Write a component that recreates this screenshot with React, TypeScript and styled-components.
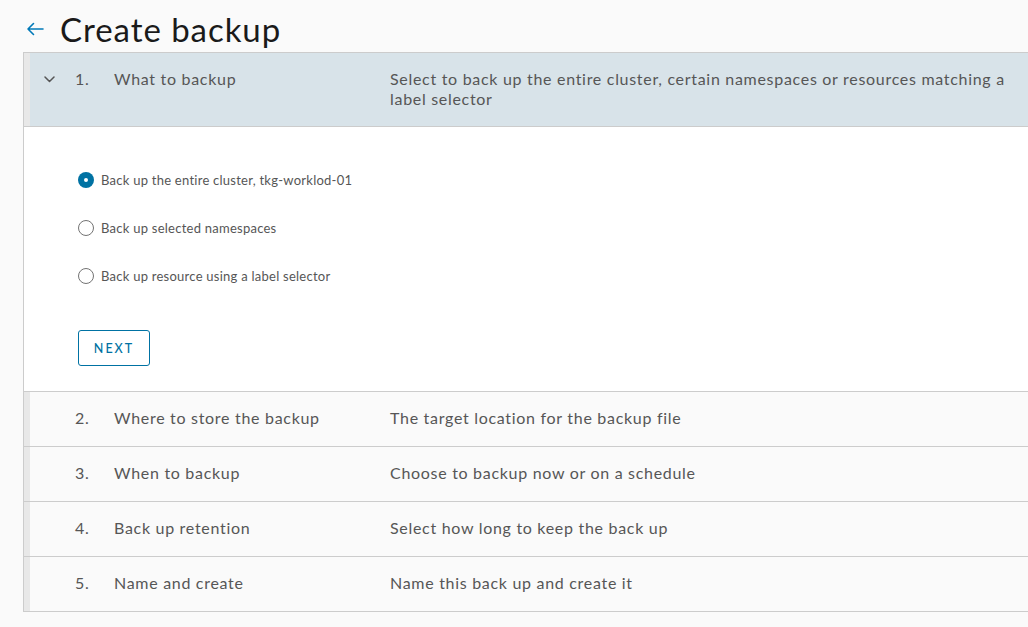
import React from "react";
import styled, { createGlobalStyle } from "styled-components";

const Global = createGlobalStyle`
  html, body { margin: 0; padding: 0; background: #fafafa; }
  body { font-family: "Lato", "Open Sans", sans-serif; color: #565656; }
  * { box-sizing: border-box; }
`;

const Page = styled.div`
  padding: 5px 0 0 23px;
  overflow: hidden;
  width: 1028px;
  height: 627px;
`;

const TitleBar = styled.div`
  display: flex;
  align-items: center;
  height: 47px;
  gap: 16px;
  padding-left: 3px;
`;

const BackButton = styled.button`
  display: flex;
  align-items: center;
  justify-content: center;
  border: none;
  background: none;
  padding: 0;
  width: 18px;
  height: 18px;
  cursor: pointer;
`;

const Title = styled.h1`
  margin: 0;
  font-family: "Lato", sans-serif;
  font-weight: 400;
  font-size: 33px;
  color: #1a1a1a;
  letter-spacing: 0.95px;
`;

const Panel = styled.div`
  border: 1px solid #cccccc;
  border-right: none;
  background: #fafafa;
`;

const Step = styled.section<{ $last?: boolean }>`
  border-bottom: ${(p) => (p.$last ? "none" : "1px solid #cccccc")};
`;

const StepHeader = styled.div<{ $open?: boolean }>`
  display: grid;
  grid-template-columns: 45px 39px 276px 1fr;
  align-items: start;
  border-left: 6px solid #e8e8e8;
  background: ${(p) => (p.$open ? "#d8e3e9" : "#fafafa")};
  padding: ${(p) => (p.$open ? "16px 20px 17px 0" : "16px 20px 18px 0")};
  font-size: 16px;
  line-height: 20px;
  color: #565656;
  letter-spacing: 0.7px;
`;

const Toggle = styled.span`
  display: flex;
  align-items: center;
  height: 20px;
  padding-left: 14px;
`;

const Num = styled.span``;
const StepTitle = styled.span``;
const StepDesc = styled.span``;

const Content = styled.div`
  background: #ffffff;
  border-top: 1px solid #cccccc;
  padding: 41px 0 25px 54px;
  display: flex;
  flex-direction: column;
`;

const RadioList = styled.div`
  display: flex;
  flex-direction: column;
  gap: 24px;
`;

const RadioRow = styled.label`
  display: flex;
  align-items: center;
  gap: 7px;
  height: 24px;
  font-size: 13px;
  color: #565656;
  letter-spacing: 0.25px;
  cursor: pointer;
`;

const RadioCircle = styled.span<{ $checked?: boolean }>`
  display: inline-block;
  width: 16px;
  height: 16px;
  border-radius: 50%;
  border: ${(p) => (p.$checked ? "none" : "1px solid #737373")};
  background: #ffffff;
  box-shadow: ${(p) => (p.$checked ? "inset 0 0 0 6px #0072a3" : "none")};
`;

const NextButton = styled.button`
  margin-top: 42px;
  width: 72px;
  height: 36px;
  border: 1px solid #0072a3;
  border-radius: 3px;
  background: #ffffff;
  color: #0072a3;
  font-family: "Lato", sans-serif;
  font-size: 12.5px;
  font-weight: 500;
  letter-spacing: 2px;
  text-transform: uppercase;
  cursor: pointer;
`;

const steps = [
  { n: "2.", title: "Where to store the backup", desc: "The target location for the backup file" },
  { n: "3.", title: "When to backup", desc: "Choose to backup now or on a schedule" },
  { n: "4.", title: "Back up retention", desc: "Select how long to keep the back up" },
  { n: "5.", title: "Name and create", desc: "Name this back up and create it" },
];

const options = [
  "Back up the entire cluster, tkg-worklod-01",
  "Back up selected namespaces",
  "Back up resource using a label selector",
];

export default function App() {
  return (
    <>
      <Global />
      <Page>
        <TitleBar>
          <BackButton aria-label="Back">
            <svg width="18" height="14" viewBox="0 0 18 14" fill="none">
              <path d="M17 7H2M7.5 1.5L2 7l5.5 5.5" stroke="#0079b8" strokeWidth="1.6" strokeLinecap="round" strokeLinejoin="round" />
            </svg>
          </BackButton>
          <Title>Create backup</Title>
        </TitleBar>
        <Panel>
          <Step>
            <StepHeader $open>
              <Toggle>
                <svg width="11" height="7" viewBox="0 0 11 7" fill="none">
                  <path d="M1 1l4.5 4.5L10 1" stroke="#565656" strokeWidth="1.5" strokeLinecap="round" strokeLinejoin="round" />
                </svg>
              </Toggle>
              <Num>1.</Num>
              <StepTitle>What to backup</StepTitle>
              <StepDesc>
                Select to back up the entire cluster, certain namespaces or resources matching a label selector
              </StepDesc>
            </StepHeader>
            <Content>
              <RadioList>
                {options.map((o, i) => (
                  <RadioRow key={o}>
                    <RadioCircle $checked={i === 0} />
                    {o}
                  </RadioRow>
                ))}
              </RadioList>
              <div>
                <NextButton>Next</NextButton>
              </div>
            </Content>
          </Step>
          {steps.map((s, i) => (
            <Step key={s.n} $last={i === steps.length - 1}>
              <StepHeader>
                <Toggle />
                <Num>{s.n}</Num>
                <StepTitle>{s.title}</StepTitle>
                <StepDesc>{s.desc}</StepDesc>
              </StepHeader>
            </Step>
          ))}
        </Panel>
      </Page>
    </>
  );
}
